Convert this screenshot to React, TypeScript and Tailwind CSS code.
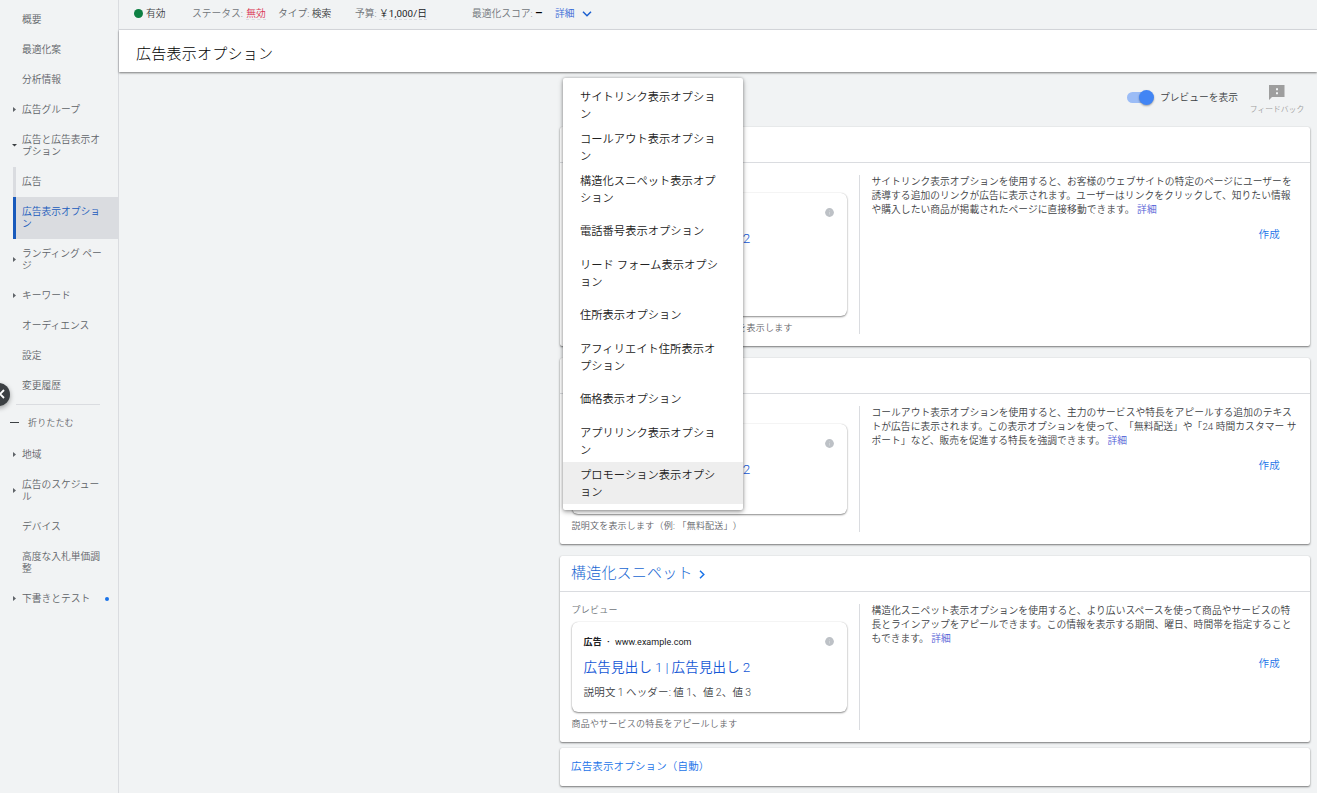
import { Fragment } from 'react';
import clsx from 'clsx';

type NavItem = {
  lines: string[];
  arrow?: 'right' | 'down';
  child?: boolean;
  selected?: boolean;
  dot?: boolean;
};

const mainNav: NavItem[] = [
  { lines: ['概要'] },
  { lines: ['最適化案'] },
  { lines: ['分析情報'] },
  { lines: ['広告グループ'], arrow: 'right' },
  { lines: ['広告と広告表示オ', 'プション'], arrow: 'down' },
  { lines: ['広告'], child: true },
  { lines: ['広告表示オプショ', 'ン'], child: true, selected: true },
  { lines: ['ランディング ペー', 'ジ'], arrow: 'right' },
  { lines: ['キーワード'], arrow: 'right' },
  { lines: ['オーディエンス'] },
  { lines: ['設定'] },
  { lines: ['変更履歴'] },
];

const moreNav: NavItem[] = [
  { lines: ['地域'], arrow: 'right' },
  { lines: ['広告のスケジュー', 'ル'], arrow: 'right' },
  { lines: ['デバイス'] },
  { lines: ['高度な入札単価調', '整'] },
  { lines: ['下書きとテスト'], arrow: 'right', dot: true },
];

const menuItems = [
  ['サイトリンク表示オプショ', 'ン'],
  ['コールアウト表示オプショ', 'ン'],
  ['構造化スニペット表示オプ', 'ション'],
  ['電話番号表示オプション'],
  ['リード フォーム表示オプシ', 'ョン'],
  ['住所表示オプション'],
  ['アフィリエイト住所表示オ', 'プション'],
  ['価格表示オプション'],
  ['アプリリンク表示オプショ', 'ン'],
  ['プロモーション表示オプシ', 'ョン'],
];

type Extension = {
  title?: string;
  full?: boolean;
  tall?: boolean;
  caption: string;
  description: string[];
};

const extensions: Extension[] = [
  {
    tall: true,
    caption: 'ウェブサイトの特定のページへのリンクを表示します',
    description: [
      'サイトリンク表示オプションを使用すると、お客様のウェブサイトの特定のページにユーザーを',
      '誘導する追加のリンクが広告に表示されます。ユーザーはリンクをクリックして、知りたい情報',
      'や購入したい商品が掲載されたページに直接移動できます。',
    ],
  },
  {
    caption: '説明文を表示します（例: 「無料配送」）',
    description: [
      'コールアウト表示オプションを使用すると、主力のサービスや特長をアピールする追加のテキス',
      'トが広告に表示されます。この表示オプションを使って、「無料配送」や「24 時間カスタマー サ',
      'ポート」など、販売を促進する特長を強調できます。',
    ],
  },
  {
    title: '構造化スニペット',
    full: true,
    caption: '商品やサービスの特長をアピールします',
    description: [
      '構造化スニペット表示オプションを使用すると、より広いスペースを使って商品やサービスの特',
      '長とラインアップをアピールできます。この情報を表示する期間、曜日、時間帯を指定すること',
      'もできます。',
    ],
  },
];

const cardShadow = 'shadow-[0_1px_2px_rgba(0,0,0,0.5),0_0_1px_rgba(0,0,0,0.15)]';

function Lines({ lines }: { lines: string[] }) {
  return (
    <>
      {lines.map((line, i) => (
        <Fragment key={i}>
          {i > 0 && <br />}
          {line}
        </Fragment>
      ))}
    </>
  );
}

function NavRow({ item }: { item: NavItem }) {
  return (
    <a
      className={clsx(
        'flex items-center ml-[13px] text-[9.75px] leading-3 whitespace-nowrap',
        item.lines.length > 1 ? 'h-[42px]' : 'h-[30px]',
        item.child && 'border-l-[3px]',
        item.selected ? 'bg-[#dadce0] border-[#185abc] text-[#185abc]' : 'border-[#dadce0] text-[#5f6368]',
      )}
    >
      {!item.child && (
        <span className="w-[3px] shrink-0">
          {item.arrow === 'right' && (
            <svg width="3" height="5" viewBox="0 0 3 5" className="-mt-0.5" fill="#5f6368">
              <path d="M0 0L3 2.5L0 5Z" />
            </svg>
          )}
          {item.arrow === 'down' && (
            <svg width="5" height="3" viewBox="0 0 5 3" className="-mt-0.5 -ml-px max-w-none" fill="#3c4043">
              <path d="M0 0H5L2.5 2.5Z" />
            </svg>
          )}
        </span>
      )}
      <span className="ml-1.5">
        <Lines lines={item.lines} />
      </span>
      {item.dot && <span className="ml-auto mr-[9px] size-1 rounded-full bg-[#1a73e8]" />}
    </a>
  );
}

function Sidebar() {
  return (
    <nav className="relative w-[119px] shrink-0 border-r border-[#dadce0] pt-[5px]">
      {mainNav.map((item, i) => (
        <NavRow key={i} item={item} />
      ))}
      <div className="mt-[3px] ml-4 w-[84px] h-px bg-[#dadce0]" />
      <div className="flex items-center h-[35px] pt-[3px] pl-2.5 text-[9px] tracking-[0.15px] text-[#5f6368]">
        <span className="w-[9px] h-px bg-[#3c4043] mb-1" />
        <span className="ml-[9px]">折りたたむ</span>
      </div>
      {moreNav.map((item, i) => (
        <NavRow key={i} item={item} />
      ))}
      {/* Collapse handle hanging over the window edge */}
      <button className="absolute -left-[13px] top-[383px] size-[23px] rounded-full bg-[#3c4043] shadow-[0_2px_5px_rgba(0,0,0,0.35)]">
        <svg width="6" height="10" viewBox="0 0 6 10" className="absolute left-3 top-[6px]" fill="none" stroke="#fff" strokeWidth="1.8">
          <path d="M5 1L1 5L5 9" />
        </svg>
      </button>
    </nav>
  );
}

function StatusBar() {
  return (
    <div className="flex items-center h-[30px] pb-[3px] pl-[15px] border-b border-[#dadce0] text-[9.75px] leading-[13px] text-[#3c4043] whitespace-nowrap">
      <div className="w-[58px] flex items-center">
        <span className="size-[9px] mt-px rounded-full bg-[#0d8043] mr-[3px]" />
        有効
      </div>
      <div className="w-[86px]">
        <span className="text-[#70757a]">ステータス: </span>
        <span className="ml-px text-[#d93050] border-b border-dashed border-[#dadce0]">無効</span>
      </div>
      <div className="w-[77px]">
        <span className="text-[#5f6368]">タイプ: </span>
        検索
      </div>
      <div className="w-[117px]">
        <span className="text-[#70757a]">予算: </span>
        <span className="font-normal tracking-[0.1px] text-[#202124] border-b border-dashed border-[#dadce0]">
          <span className="font-[350]">￥</span>1,000/<span className="font-[350]">日</span>
        </span>
      </div>
      <div className="w-[83px]">
        <span className="text-[#70757a]">最適化スコア: </span>
        <span className="text-[12px] font-medium text-black">–</span>
      </div>
      <span className="text-[#3367d6]">詳細</span>
      <svg width="10" height="6" viewBox="0 0 10 6" className="ml-[7px] mt-0.5" fill="none" stroke="#1a5fd0" strokeWidth="1.5">
        <path d="M1 0.8L5 4.8L9 0.8" />
      </svg>
    </div>
  );
}

function Toolbar() {
  return (
    <div className="flex h-[54px] justify-end pr-3">
      <div className="flex items-center h-[49px]">
        <span className="relative w-[27px] h-[15px] flex items-center">
          <span className="w-[23px] h-[11px] rounded-full bg-[#9bbcf6]" />
          <span className="absolute right-0 top-0 size-[15px] rounded-full bg-[#4285f4] shadow-[0_1px_2px_rgba(0,0,0,0.35)]" />
        </span>
        <span className="ml-1.5 pt-px text-[9.75px] text-[#3c4043]">プレビューを表示</span>
      </div>
      <div className="flex flex-col items-center w-[56px] ml-[11px] pt-3 text-[#9e9e9e]">
        <svg width="16" height="15" viewBox="0 0 16 15" fill="#9e9e9e">
          <path d="M0 0H15.5V12H3L0 15Z" />
          <path d="M7 3.2H9V5.2H7ZM7 7.2H9V9.2H7Z" fill="#f1f3f4" />
        </svg>
        <span className="text-[7.8px] leading-[10px] mt-[5px] whitespace-nowrap">フィードバック</span>
      </div>
    </div>
  );
}

function InfoIcon() {
  return (
    <svg width="9" height="9" viewBox="0 0 9 9" className="absolute right-[13px] top-[15px]">
      <circle cx="4.5" cy="4.5" r="4.4" fill="#bdc1c6" />
      <path d="M4.5 4V6.6M4.5 2.4V3.2" stroke="#cfd3d6" />
    </svg>
  );
}

function AdPreview({ extension }: { extension: Extension }) {
  return (
    <div
      className={clsx(
        'relative w-[275.4px] rounded-md pl-3 pt-[13px] text-[#3c4043] whitespace-nowrap shadow-[0_1px_2px_rgba(0,0,0,0.45),0_0_1px_rgba(0,0,0,0.2)]',
        extension.tall ? 'h-[123px]' : 'h-[90px]',
      )}
    >
      <InfoIcon />
      <div className="h-[15px] flex items-center text-[9px] text-[#202124]">
        {extension.full && (
          <>
            <b className="font-bold">広告</b>
            <span className="mx-[5px] font-bold">·</span>
            <span className="tracking-[0.02px] font-normal">www.example.com</span>
          </>
        )}
      </div>
      <div className="mt-[7px] h-5 leading-5 text-[13.5px] [word-spacing:-0.7px] text-[#1558d6]">広告見出し 1 | 広告見出し 2</div>
      {extension.full && (
        <div className="mt-2 leading-[15px] text-[10.5px] tracking-[0.2px] [word-spacing:-0.6px]">説明文 1 ヘッダー: 値 1、値 2、値 3</div>
      )}
    </div>
  );
}

function ExtensionCard({ extension }: { extension: Extension }) {
  return (
    <section className={clsx('bg-white rounded-xs mb-3', cardShadow)}>
      <h2 className="flex items-center h-9 pl-[11px] border-b border-[#dadce0] text-[15px] font-light tracking-[0.2px] text-[#1967d2]">
        {extension.title && (
          <>
            {extension.title}
            <svg width="6" height="9" viewBox="0 0 6 9" className="ml-1.5 mt-0.5" fill="none" stroke="#1a73e8" strokeWidth="1.5">
              <path d="M1 0.8L4.8 4.5L1 8.2" />
            </svg>
          </>
        )}
      </h2>
      <div className="flex pt-3 pb-3">
        <div className="w-[300px] shrink-0 pl-[11.5px] border-r border-[#dadce0] text-[9px] tracking-[0.22px] text-[#70757a]">
          <div className="h-[18px] pt-px leading-[11px]">{extension.full && 'プレビュー'}</div>
          <AdPreview extension={extension} />
          <div className="h-[18px] pt-1.5 leading-3 text-[#5f6368] whitespace-nowrap">{extension.caption}</div>
        </div>
        <div className="flex-1 pl-[11.5px] text-[#3c4043]">
          <p className="text-[9.75px] leading-[14px] tracking-[0.04px] whitespace-nowrap">
            <Lines lines={extension.description} /> <a className="text-[#4f5bd5]">詳細</a>
          </p>
          <div className="mt-2.5 pr-[30px] text-right text-[10.5px] leading-4 tracking-[0.2px] text-[#1a73e8]">作成</div>
        </div>
      </div>
    </section>
  );
}

function ExtensionMenu() {
  return (
    <ul className="absolute left-[563px] top-[78px] w-[180px] py-1.5 bg-white rounded-xs text-[11.25px] leading-[17px] text-[#212121] whitespace-nowrap shadow-[0_2px_5px_rgba(0,0,0,0.35),0_0_3px_rgba(0,0,0,0.25)]">
      {menuItems.map((lines, i) => (
        <li key={i} className={clsx('flex items-center h-[42px] pt-px pl-[17px] tracking-[0.04px]', i === menuItems.length - 1 && 'bg-[#eee]')}>
          <span>
            <Lines lines={lines} />
          </span>
        </li>
      ))}
    </ul>
  );
}

export default function App() {
  return (
    <div
      lang="ja"
      className="relative flex h-[793px] w-[1317px] overflow-hidden bg-[#f1f3f4] font-[Roboto,'Noto_Sans_CJK_JP',sans-serif] font-[350] [text-spacing-trim:space-all]"
    >
      <Sidebar />
      <main className="flex-1 min-w-0">
        <StatusBar />
        <h1 className="relative h-[42px] mb-px pl-[17px] leading-[48px] bg-white text-[15px] font-light tracking-[0.25px] text-black shadow-[0_1px_2px_rgba(0,0,0,0.5)]">
          広告表示オプション
        </h1>
        <Toolbar />
        <div className="ml-[441px] w-[750px]">
          {extensions.map((extension, i) => (
            <ExtensionCard key={i} extension={extension} />
          ))}
          <div className={clsx('-mt-1.5 h-[38px] pl-[11px] bg-white rounded-xs text-[10.5px] leading-[38px] tracking-[0.15px] text-[#1a73e8]', cardShadow)}>
            広告表示オプション（自動）
          </div>
        </div>
      </main>
      <ExtensionMenu />
    </div>
  );
}
